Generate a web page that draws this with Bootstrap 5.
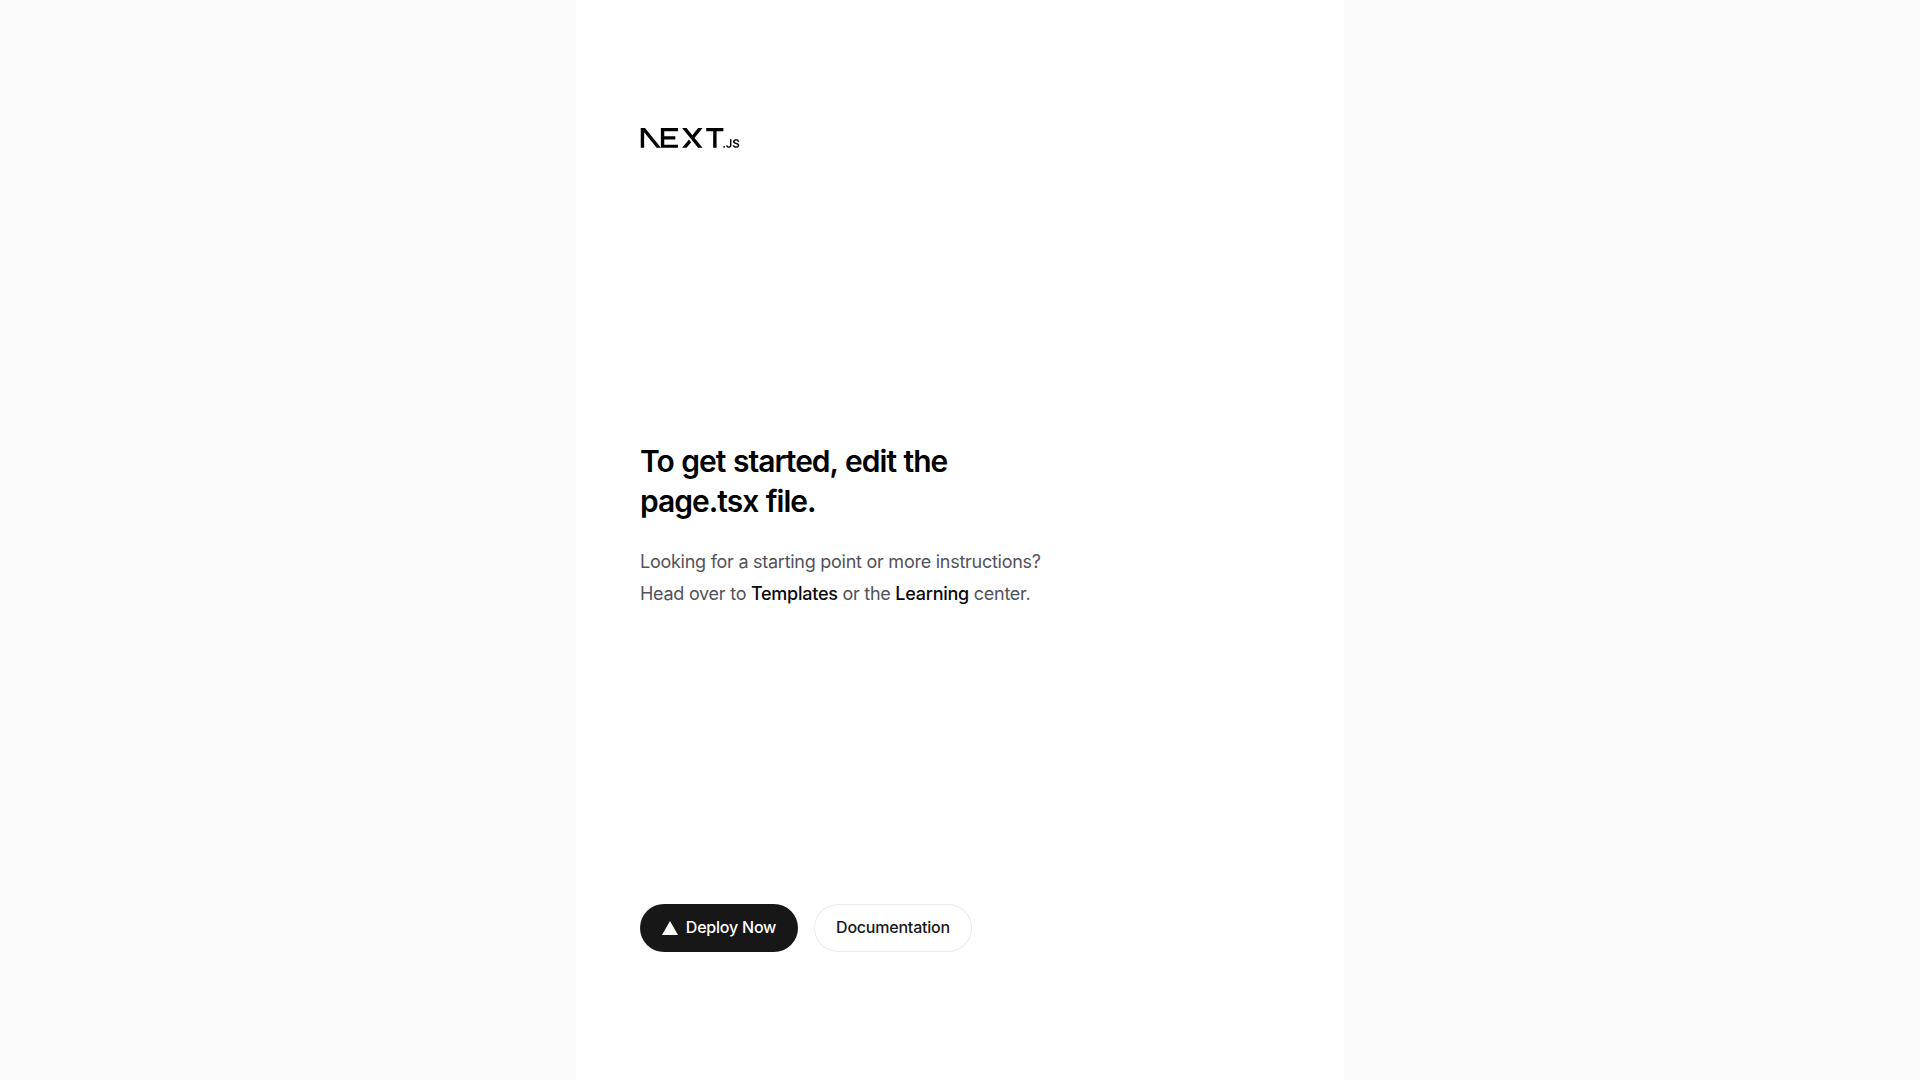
<!DOCTYPE html>
<html lang="en">
<head>
<meta charset="utf-8">
<title>Create Next App</title>
<link href="https://cdn.jsdelivr.net/npm/bootstrap@5.3.0/dist/css/bootstrap.min.css" rel="stylesheet">
<style>
html, body { background: #fafafa; }
body { font-family: Inter, "Liberation Sans", sans-serif; overflow: hidden; }
.shell { width: 768px; min-height: 100vh; background: #fff; padding: 128px 64px; }
.brand-logo { width: 100px; height: 20px; display: block; }
.headline { font-size: 30px; line-height: 40px; font-weight: 600; letter-spacing: -1px; word-spacing: 1px; color: #000; max-width: 320px; margin: -1px 0 1px; }
.intro { font-size: 18px; line-height: 32px; color: #52525b; max-width: 448px; margin: 0; letter-spacing: -0.26px; }
.intro a { color: #09090b; font-weight: 500; text-decoration: none; }
.pill { height: 48px; width: 158px; border-radius: 999px; font-size: 16px; font-weight: 500; line-height: 24px; padding: 0 20px 2px; letter-spacing: -0.22px; }
.pill-dark { background: #171717; color: #fff; border: 0; }
.pill-light { background: #fff; color: #171717; border: 1px solid rgba(0,0,0,.08); }
.deploy-mark { margin-top: 2px; }
</style>
</head>
<body>
<main class="shell mx-auto d-flex flex-column justify-content-between align-items-start">
  <svg class="brand-logo" xmlns="http://www.w3.org/2000/svg" viewBox="0 0 394 80" fill="none" role="img" aria-label="Next.js logo"><path fill="#000" d="M262 0h68.5v12.7h-27.2v66.6h-13.6V12.7H262V0ZM149 0v12.7H94v20.4h44.3v12.6H94v21h55v12.6H80.5V0h68.7zm34.3 0h-17.8l63.8 79.4h17.9l-32-39.7 32-39.6h-17.9l-23 28.6-23-28.6zm18.3 56.7-9-11-27.1 33.7h17.8l18.3-22.7z"/><path fill="#000" d="M81 79.3 17 0H0v79.3h13.6V17l50.2 62.3H81Zm252.6-.4c-1 0-1.8-.4-2.5-1s-1.1-1.6-1.1-2.6.3-1.8 1-2.5 1.6-1 2.6-1 1.8.3 2.5 1a3.4 3.4 0 0 1 .6 4.3 3.7 3.7 0 0 1-3 1.8zm23.2-33.5h6v23.3c0 2.1-.4 4-1.3 5.5a9.1 9.1 0 0 1-3.8 3.5c-1.6.8-3.5 1.3-5.7 1.3-2 0-3.7-.4-5.3-1s-2.8-1.8-3.7-3.2c-.9-1.3-1.4-3-1.4-5h6c.1.8.3 1.6.7 2.2s1 1.2 1.6 1.5c.7.4 1.5.5 2.4.5 1 0 1.8-.2 2.4-.6a4 4 0 0 0 1.6-1.8c.3-.8.5-1.8.5-3V45.5zm30.9 9.1a4.4 4.4 0 0 0-2-3.3 7.5 7.5 0 0 0-4.3-1.1c-1.3 0-2.4.2-3.3.5-.9.4-1.6 1-2 1.6a3.5 3.5 0 0 0-.3 4c.3.5.7.9 1.3 1.2l1.8 1 2 .5 3.2.8c1.3.3 2.5.7 3.7 1.2a13 13 0 0 1 3.2 1.8 8.1 8.1 0 0 1 3 6.5c0 2-.5 3.7-1.5 5.1a10 10 0 0 1-4.4 3.5c-1.8.8-4.1 1.2-6.8 1.2-2.6 0-4.9-.4-6.8-1.2-2-.8-3.4-2-4.5-3.5a10 10 0 0 1-1.7-5.6h6a5 5 0 0 0 3.5 4.6c1 .4 2.2.6 3.4.6 1.3 0 2.5-.2 3.5-.6 1-.4 1.8-1 2.4-1.7a4 4 0 0 0 .8-2.4c0-.9-.2-1.6-.7-2.2a11 11 0 0 0-2.1-1.4l-3.2-1-3.8-1c-2.8-.7-5-1.7-6.6-3.2a7.2 7.2 0 0 1-2.4-5.7 8 8 0 0 1 1.7-5 10 10 0 0 1 4.3-3.5c2-.8 4-1.2 6.4-1.2 2.3 0 4.4.4 6.2 1.2 1.8.8 3.2 2 4.3 3.4 1 1.4 1.5 3 1.5 5h-5.8z"/></svg>
  <div class="d-flex flex-column gap-4 align-items-start">
    <h1 class="headline">To get started, edit the page.tsx file.</h1>
    <p class="intro">Looking for a starting point or more instructions? Head over to <a href="#">Templates</a> or the <a href="#">Learning</a> center.</p>
  </div>
  <div class="d-flex gap-3">
    <a href="#" class="pill pill-dark btn d-flex align-items-center justify-content-center gap-2">
      <svg class="deploy-mark" width="16" height="16" viewBox="0 0 1155 1000" aria-hidden="true"><path fill="#fff" d="m577.3 0 577.4 1000H0z"/></svg>
      Deploy Now
    </a>
    <a href="#" class="pill pill-light btn d-flex align-items-center justify-content-center">Documentation</a>
  </div>
</main>
<script src="https://cdn.jsdelivr.net/npm/bootstrap@5.3.0/dist/js/bootstrap.bundle.min.js"></script>
</body>
</html>
